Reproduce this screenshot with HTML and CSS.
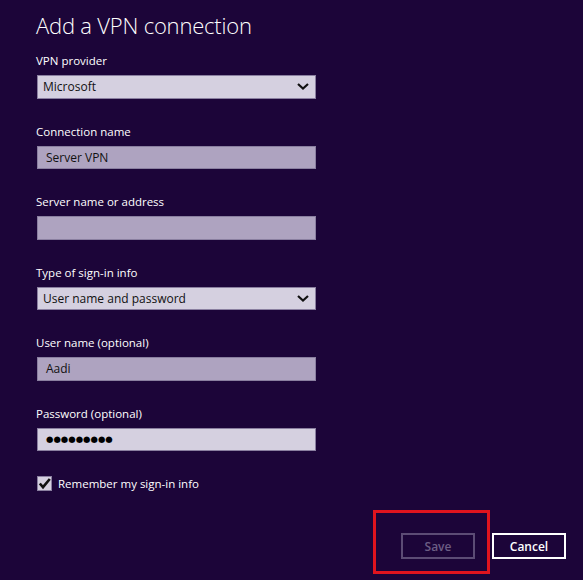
FILE: index.html
```html
<!DOCTYPE html>
<html>
<head>
<meta charset="utf-8">
<link rel="stylesheet" href="styles.css">
</head>
<body>
<div class="page">
  <h1 class="title">Add a VPN connection</h1>
  <div class="fields">
    <div class="field">
      <div class="label">VPN provider</div>
      <div class="box select"><span>Microsoft</span>
        <svg class="chev" width="12" height="7" viewBox="0 0 12 7"><path d="M1 1 L6 5.5 L11 1" fill="none" stroke="#111" stroke-width="2.2"/></svg>
      </div>
    </div>
    <div class="field">
      <div class="label">Connection name</div>
      <div class="box input dim"><span class="val">Server VPN</span></div>
    </div>
    <div class="field">
      <div class="label">Server name or address</div>
      <div class="box input dim"></div>
    </div>
    <div class="field">
      <div class="label">Type of sign-in info</div>
      <div class="box select"><span>User name and password</span>
        <svg class="chev" width="12" height="7" viewBox="0 0 12 7"><path d="M1 1 L6 5.5 L11 1" fill="none" stroke="#111" stroke-width="2.2"/></svg>
      </div>
    </div>
    <div class="field">
      <div class="label">User name (optional)</div>
      <div class="box input dim"><span class="val">Aadi</span></div>
    </div>
    <div class="field">
      <div class="label">Password (optional)</div>
      <div class="box input light"><span class="val dots">●●●●●●●●●</span></div>
    </div>
  </div>
  <div class="remember">
    <span class="check"><svg width="13" height="13" viewBox="0 0 13 13"><path d="M1.8 6.5 L5 10.2 L11.8 2" fill="none" stroke="#111" stroke-width="2.6"/></svg></span>
    <span>Remember my sign-in info</span>
  </div>
  <div class="actions">
    <div class="highlight">
      <div class="btn save">Save</div>
    </div>
    <div class="btn cancel">Cancel</div>
  </div>
</div>
</body>
</html>
```
FILE: styles.css
```css
html, body {
  margin: 0;
  padding: 0;
}
body {
  background: #1c0539;
  width: 583px;
  height: 580px;
  overflow: hidden;
  font-family: "Open Sans", "Noto Sans", sans-serif;
  color: #ffffff;
}
.page {
  padding: 9px 0 0 36px;
  position: relative;
  height: 571px;
}
.title {
  margin: 0;
  font-weight: 300;
  font-size: 22px;
  line-height: 32px;
  letter-spacing: -0.2px;
}
.fields {
  margin-top: 13px;
  display: flex;
  flex-direction: column;
  gap: 26px;
}
.field {
  display: flex;
  flex-direction: column;
}
.label {
  font-size: 11.5px;
  line-height: 14px;
  height: 14px;
  margin-bottom: 7px;
}
.box {
  margin-left: 1px;
  width: 279px;
  height: 23.5px;
  box-sizing: border-box;
  display: flex;
  align-items: center;
  font-size: 12px;
  color: #111;
}
.select {
  background: #d5d0e0;
  border: 1px solid #8a7fa0;
  padding: 0 6px 0 5px;
  justify-content: space-between;
}
.input {
  border: 1px solid #8a7fa0;
  padding: 0 8px;
}
.dim {
  background: #aea3c0;
}
.light {
  background: #d5d0e0;
}
.dots {
  font-family: "DejaVu Sans", sans-serif;
  font-size: 8.5px;
  letter-spacing: 0;
  color: #000;
}
.chev {
  display: block;
}
.remember {
  margin-top: 25px;
  display: flex;
  align-items: center;
  gap: 6px;
  font-size: 11.5px;
  margin-left: 1px;
}
.check {
  width: 15px;
  height: 15px;
  box-sizing: border-box;
  background: #d5d0e0;
  border: 1px solid #8a7fa0;
  display: flex;
  align-items: center;
  justify-content: center;
}
.check svg { display: block; }
.actions {
  position: absolute;
  left: 373px;
  top: 510px;
  display: flex;
  align-items: flex-start;
}
.highlight {
  width: 117px;
  height: 64px;
  box-sizing: border-box;
  border: 3px solid #e0141e;
  padding: 20px 0 0 25px;
}
.btn {
  width: 74px;
  height: 26px;
  box-sizing: border-box;
  display: flex;
  align-items: center;
  justify-content: center;
  font-size: 12px;
  font-weight: 600;
}
.save {
  border: 2px solid #5c4c75;
  color: #6c5d84;
}
.cancel {
  margin-left: 2px;
  margin-top: 23px;
  border: 2px solid #ffffff;
  color: #ffffff;
}
```
